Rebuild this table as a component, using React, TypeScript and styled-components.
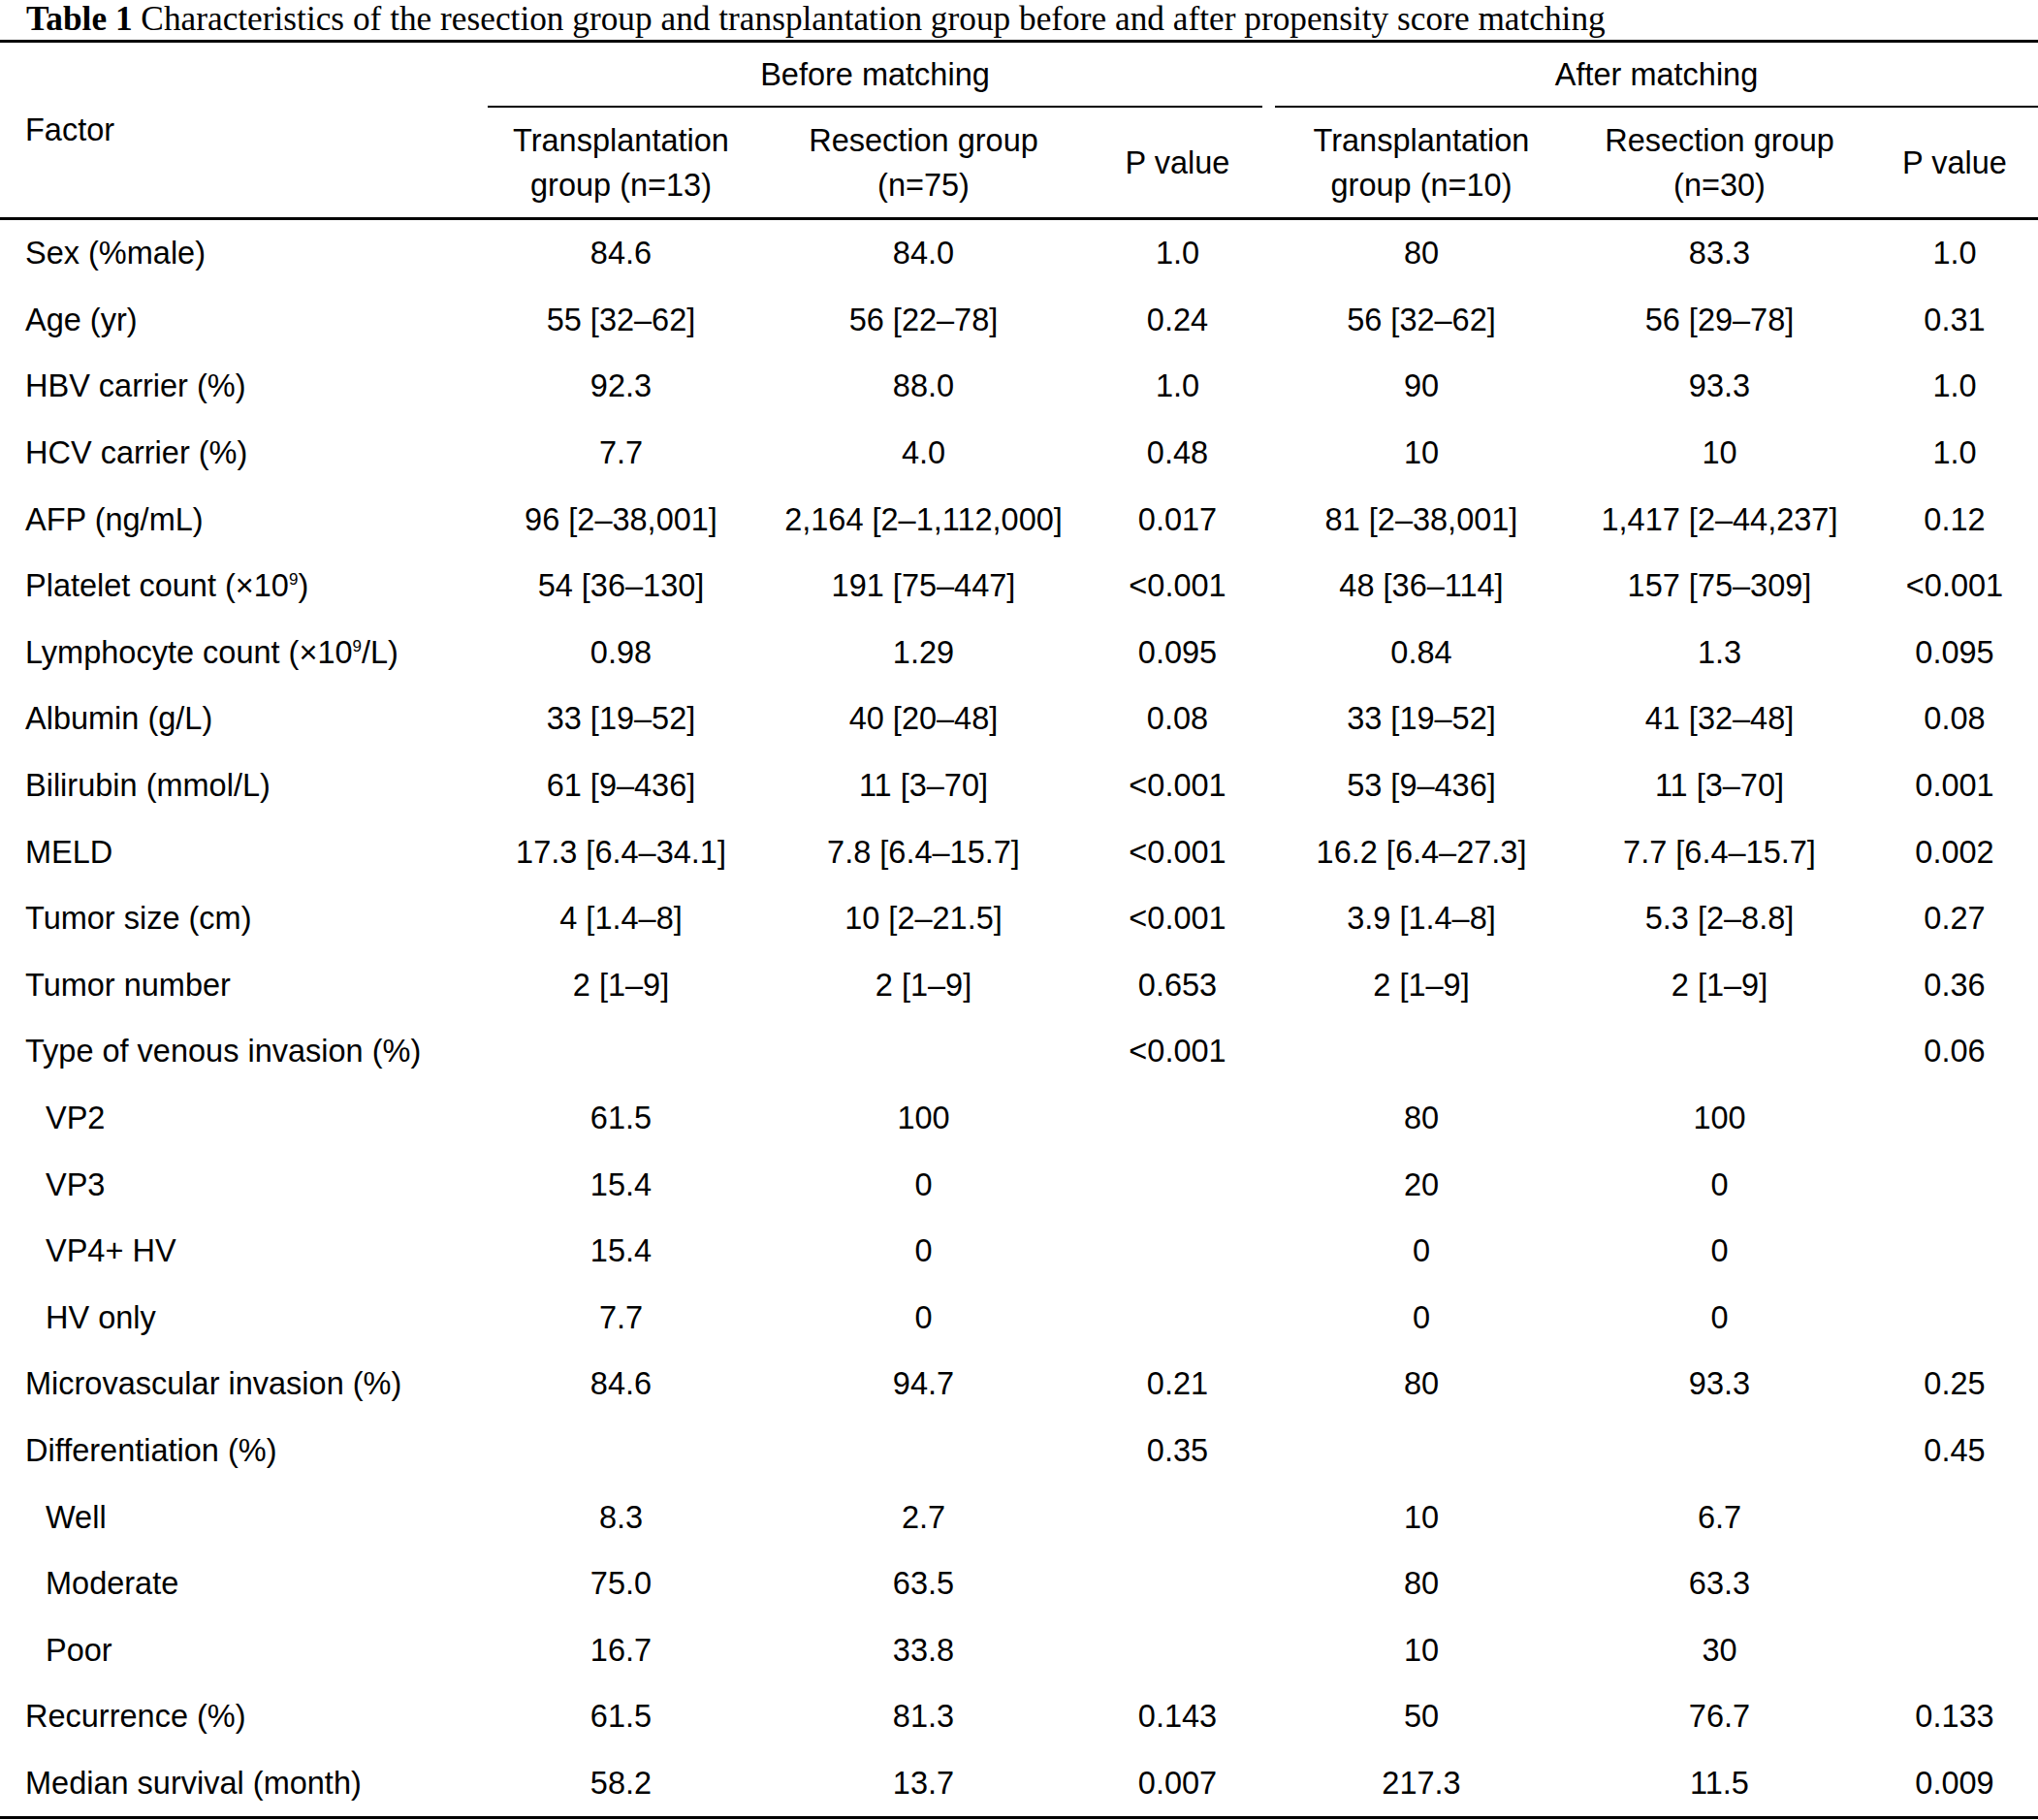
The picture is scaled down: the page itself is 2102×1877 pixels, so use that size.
import React from "react";
import styled, { createGlobalStyle } from "styled-components";

const GlobalStyle = createGlobalStyle`
  html, body { margin: 0; padding: 0; background: #ffffff; }
  body {
    font-family: "Liberation Sans", Arial, Helvetica, sans-serif;
    color: #000000;
  }
`;

const COLS = "503px 275px 349px 175px 13px 302px 313px 172px";

const Page = styled.div`
  width: 2102px;
`;

const Caption = styled.div`
  box-sizing: border-box;
  height: 41px;
  padding-left: 27px;
  font-family: "Liberation Serif", "Times New Roman", serif;
  font-size: 35.3px;
  line-height: normal;
  white-space: nowrap;
`;

const CaptionLabel = styled.span`
  font-weight: 700;
`;

const Head = styled.div`
  display: grid;
  grid-template-columns: ${COLS};
  grid-template-rows: 67px 113px;
  border-top: 3px solid #000;
  border-bottom: 3px solid #000;
  font-size: 32.5px;
  line-height: 46px;
`;

const FactorHead = styled.div`
  grid-row: 1 / span 2;
  grid-column: 1;
  display: flex;
  align-items: center;
  padding-left: 26px;
`;

const GroupHead = styled.div<{ $col: number }>`
  grid-row: 1;
  grid-column: ${(p) => p.$col} / span 3;
  display: flex;
  align-items: center;
  justify-content: center;
  border-bottom: 2px solid #000;
  white-space: nowrap;
`;

const ColHead = styled.div<{ $col: number }>`
  grid-row: 2;
  grid-column: ${(p) => p.$col};
  display: flex;
  align-items: center;
  justify-content: center;
  text-align: center;
  white-space: nowrap;
`;

const Body = styled.div`
  border-bottom: 3px solid #000;
`;

const Row = styled.div`
  display: grid;
  grid-template-columns: ${COLS};
  height: 68.6px;
  align-items: center;
  font-size: 32.5px;
  line-height: 36px;
`;

const Label = styled.div<{ $sub?: boolean }>`
  padding-left: ${(p) => (p.$sub ? 47 : 26)}px;
  white-space: nowrap;
`;

const Cell = styled.div`
  text-align: center;
  white-space: nowrap;
`;

const Sup = styled.sup`
  font-size: 17px;
  line-height: 0;
  vertical-align: 12px;
`;

type RowData = {
  label: React.ReactNode;
  sub?: boolean;
  v: [string, string, string, string, string, string];
};

const rows: RowData[] = [
  { label: "Sex (%male)", v: ["84.6", "84.0", "1.0", "80", "83.3", "1.0"] },
  { label: "Age (yr)", v: ["55 [32–62]", "56 [22–78]", "0.24", "56 [32–62]", "56 [29–78]", "0.31"] },
  { label: "HBV carrier (%)", v: ["92.3", "88.0", "1.0", "90", "93.3", "1.0"] },
  { label: "HCV carrier (%)", v: ["7.7", "4.0", "0.48", "10", "10", "1.0"] },
  { label: "AFP (ng/mL)", v: ["96 [2–38,001]", "2,164 [2–1,112,000]", "0.017", "81 [2–38,001]", "1,417 [2–44,237]", "0.12"] },
  {
    label: (
      <>
        Platelet count (×10<Sup>9</Sup>)
      </>
    ),
    v: ["54 [36–130]", "191 [75–447]", "<0.001", "48 [36–114]", "157 [75–309]", "<0.001"],
  },
  {
    label: (
      <>
        Lymphocyte count (×10<Sup>9</Sup>/L)
      </>
    ),
    v: ["0.98", "1.29", "0.095", "0.84", "1.3", "0.095"],
  },
  { label: "Albumin (g/L)", v: ["33 [19–52]", "40 [20–48]", "0.08", "33 [19–52]", "41 [32–48]", "0.08"] },
  { label: "Bilirubin (mmol/L)", v: ["61 [9–436]", "11 [3–70]", "<0.001", "53 [9–436]", "11 [3–70]", "0.001"] },
  { label: "MELD", v: ["17.3 [6.4–34.1]", "7.8 [6.4–15.7]", "<0.001", "16.2 [6.4–27.3]", "7.7 [6.4–15.7]", "0.002"] },
  { label: "Tumor size (cm)", v: ["4 [1.4–8]", "10 [2–21.5]", "<0.001", "3.9 [1.4–8]", "5.3 [2–8.8]", "0.27"] },
  { label: "Tumor number", v: ["2 [1–9]", "2 [1–9]", "0.653", "2 [1–9]", "2 [1–9]", "0.36"] },
  { label: "Type of venous invasion (%)", v: ["", "", "<0.001", "", "", "0.06"] },
  { label: "VP2", sub: true, v: ["61.5", "100", "", "80", "100", ""] },
  { label: "VP3", sub: true, v: ["15.4", "0", "", "20", "0", ""] },
  { label: "VP4+ HV", sub: true, v: ["15.4", "0", "", "0", "0", ""] },
  { label: "HV only", sub: true, v: ["7.7", "0", "", "0", "0", ""] },
  { label: "Microvascular invasion (%)", v: ["84.6", "94.7", "0.21", "80", "93.3", "0.25"] },
  { label: "Differentiation (%)", v: ["", "", "0.35", "", "", "0.45"] },
  { label: "Well", sub: true, v: ["8.3", "2.7", "", "10", "6.7", ""] },
  { label: "Moderate", sub: true, v: ["75.0", "63.5", "", "80", "63.3", ""] },
  { label: "Poor", sub: true, v: ["16.7", "33.8", "", "10", "30", ""] },
  { label: "Recurrence (%)", v: ["61.5", "81.3", "0.143", "50", "76.7", "0.133"] },
  { label: "Median survival (month)", v: ["58.2", "13.7", "0.007", "217.3", "11.5", "0.009"] },
];

const colHeads: { col: number; lines: string[] }[] = [
  { col: 2, lines: ["Transplantation", "group (n=13)"] },
  { col: 3, lines: ["Resection group", "(n=75)"] },
  { col: 4, lines: ["P value"] },
  { col: 6, lines: ["Transplantation", "group (n=10)"] },
  { col: 7, lines: ["Resection group", "(n=30)"] },
  { col: 8, lines: ["P value"] },
];

export default function App() {
  return (
    <Page>
      <GlobalStyle />
      <Caption>
        <CaptionLabel>Table 1</CaptionLabel> Characteristics of the resection group and transplantation group before and
        after propensity score matching
      </Caption>
      <Head>
        <FactorHead>Factor</FactorHead>
        <GroupHead $col={2}>Before matching</GroupHead>
        <GroupHead $col={6}>After matching</GroupHead>
        {colHeads.map((h) => (
          <ColHead key={h.col} $col={h.col}>
            <div>
              {h.lines.map((l, i) => (
                <div key={i}>{l}</div>
              ))}
            </div>
          </ColHead>
        ))}
      </Head>
      <Body>
        {rows.map((r, i) => (
          <Row key={i}>
            <Label $sub={r.sub}>{r.label}</Label>
            <Cell>{r.v[0]}</Cell>
            <Cell>{r.v[1]}</Cell>
            <Cell>{r.v[2]}</Cell>
            <Cell />
            <Cell>{r.v[3]}</Cell>
            <Cell>{r.v[4]}</Cell>
            <Cell>{r.v[5]}</Cell>
          </Row>
        ))}
      </Body>
    </Page>
  );
}
